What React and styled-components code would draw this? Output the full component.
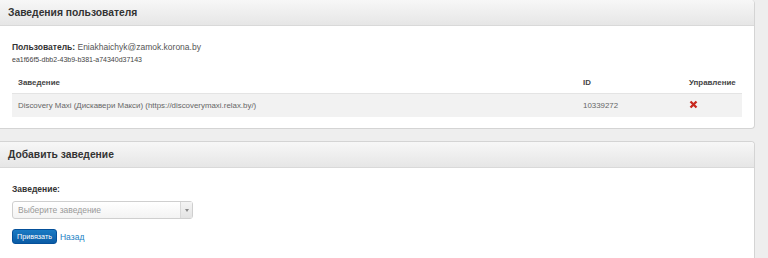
import React from "react";
import styled, { createGlobalStyle } from "styled-components";

const Global = createGlobalStyle`
  body {
    margin: 0;
    background: #eeeeee;
    font-family: "Liberation Sans", Arial, sans-serif;
    color: #333;
  }
`;

const Page = styled.div`
  padding: 0 13px 0 0;
  height: 258px;
  overflow: hidden;
  box-sizing: border-box;
`;

const Panel = styled.div`
  background: #fff;
  border: 1px solid #d4d4d4;
  border-top-width: ${(p) => (p.$noTop ? "0" : "1px")};
  border-left: none;
  border-radius: 0 4px 4px 0;
  margin-bottom: 12px;
`;

const PanelHead = styled.div`
  height: 25px;
  display: flex;
  align-items: center;
  padding: 0 8px;
  background: linear-gradient(#f7f7f7, #e6e6e6);
  border-bottom: 1px solid #d9d9d9;
  border-radius: 0 4px 0 0;
  font-size: 10.3px;
  font-weight: bold;
  color: #333;
`;

const PanelBody = styled.div`
  padding: ${(p) => p.$pad};
`;

const UserLine = styled.div`
  font-size: 8.5px;
  line-height: 12px;
  color: #555;
  b {
    color: #333;
  }
`;

const Guid = styled.div`
  font-size: 7px;
  line-height: 12px;
  color: #444;
  margin-top: 1px;
`;

const Table = styled.table`
  width: 100%;
  border-collapse: collapse;
  margin-top: 5px;
  font-size: 7.9px;
`;

const Th = styled.th`
  text-align: left;
  font-weight: bold;
  color: #444;
  height: 22px;
  padding: 0 6px;
  width: ${(p) => p.$w || "auto"};
`;

const Td = styled.td`
  background: #f2f2f2;
  border-top: 1px solid #e4e4e4;
  color: #666;
  height: 23px;
  padding: 0 6px;
`;

const Label = styled.div`
  font-size: 8.5px;
  font-weight: bold;
  color: #333;
  line-height: 12px;
`;

const Select = styled.div`
  margin-top: 6px;
  width: 181px;
  height: 18px;
  box-sizing: border-box;
  border: 1px solid #cfcfcf;
  border-radius: 3px;
  background: linear-gradient(#ffffff, #f3f3f3);
  display: flex;
  align-items: stretch;
  font-size: 8.5px;
  color: #999;
`;

const SelectText = styled.div`
  flex: 1;
  display: flex;
  align-items: center;
  padding-left: 5px;
`;

const SelectArrow = styled.div`
  width: 11px;
  border-left: 1px solid #d8d8d8;
  background: linear-gradient(#f4f4f4, #e3e3e3);
  display: flex;
  align-items: center;
  justify-content: center;
  &::after {
    content: "";
    border-left: 2.5px solid transparent;
    border-right: 2.5px solid transparent;
    border-top: 3px solid #888;
  }
`;

const Actions = styled.div`
  margin-top: 10px;
  display: flex;
  align-items: center;
  gap: 3px;
`;

const Button = styled.button`
  height: 15px;
  padding: 0 4px;
  border: 1px solid #04509a;
  border-radius: 3px;
  background: linear-gradient(#1a7bc4, #0a5ba5);
  color: #fff;
  font-family: "Liberation Sans", Arial, sans-serif;
  font-size: 7.2px;
  line-height: 13px;
`;

const Link = styled.a`
  color: #1a7fc4;
  font-size: 8.5px;
  text-decoration: none;
`;

const DeleteIcon = () => (
  <svg width="9" height="9" viewBox="0 0 9 9">
    <path d="M1.5 1.5 L7.5 7.5 M7.5 1.5 L1.5 7.5" stroke="#c8281e" strokeWidth="2.3" />
  </svg>
);

export default function App() {
  return (
    <Page>
      <Global />
      <Panel $noTop>
        <PanelHead>Заведения пользователя</PanelHead>
        <PanelBody $pad="15px 12px 11px 12px">
          <UserLine>
            <b>Пользователь:</b> Eniakhaichyk@zamok.korona.by
          </UserLine>
          <Guid>ea1f66f5-dbb2-43b9-b381-a74340d37143</Guid>
          <Table>
            <thead>
              <tr>
                <Th>Заведение</Th>
                <Th $w="94px">ID</Th>
                <Th $w="47px">Управление</Th>
              </tr>
            </thead>
            <tbody>
              <tr>
                <Td>Discovery Maxi (Дискавери Макси) (https://discoverymaxi.relax.by/)</Td>
                <Td>10339272</Td>
                <Td>
                  <DeleteIcon />
                </Td>
              </tr>
            </tbody>
          </Table>
        </PanelBody>
      </Panel>
      <Panel>
        <PanelHead>Добавить заведение</PanelHead>
        <PanelBody $pad="15px 12px 20px 12px">
          <Label>Заведение:</Label>
          <Select>
            <SelectText>Выберите заведение</SelectText>
            <SelectArrow />
          </Select>
          <Actions>
            <Button>Привязать</Button>
            <Link href="#">Назад</Link>
          </Actions>
        </PanelBody>
      </Panel>
    </Page>
  );
}
